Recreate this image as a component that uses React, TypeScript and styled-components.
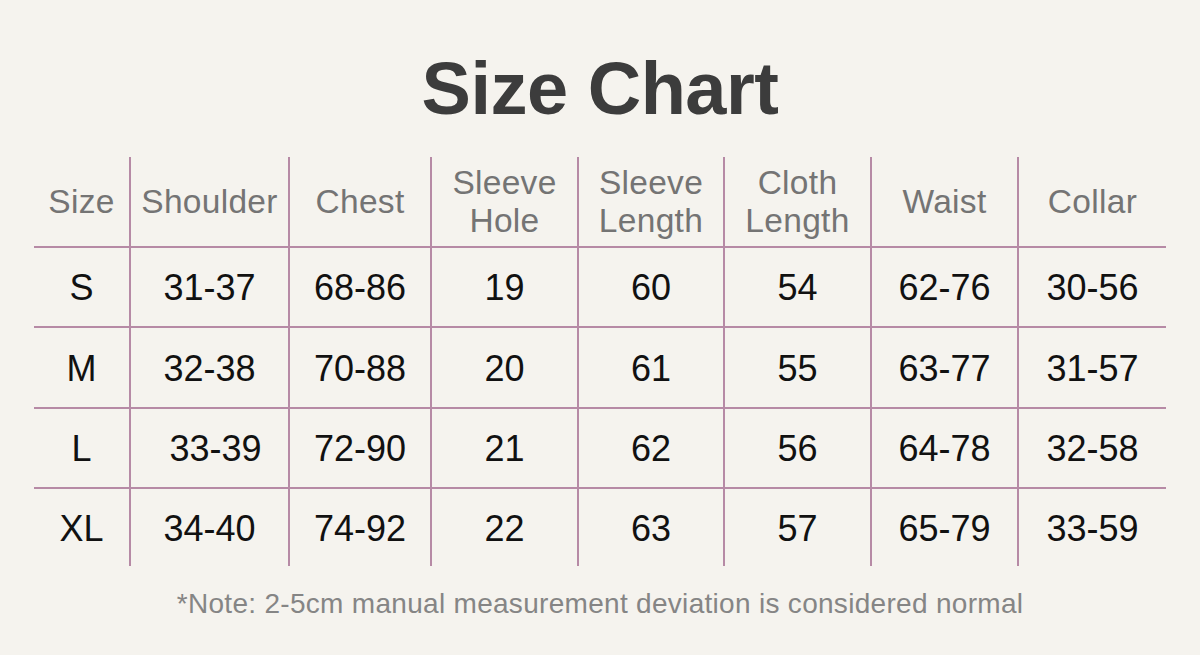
import React from "react";
import styled, { createGlobalStyle } from "styled-components";

const GlobalStyle = createGlobalStyle`
  html, body {
    margin: 0;
    padding: 0;
    background: #f5f3ee;
  }
  body {
    font-family: "Liberation Sans", Arial, sans-serif;
  }
`;

const Page = styled.div`
  width: 1200px;
  height: 655px;
  background: #f5f3ee;
  display: flex;
  flex-direction: column;
  align-items: center;
  padding-top: 52px;
  box-sizing: border-box;
  overflow: hidden;
`;

const Title = styled.h1`
  margin: 0;
  font-family: "Liberation Sans", Arial, sans-serif;
  font-weight: 700;
  font-size: 74px;
  line-height: 1;
  color: #3c3c3c;
  letter-spacing: -0.5px;
`;

const Grid = styled.div`
  margin-top: 31px;
  display: grid;
  grid-template-columns: 95px 159px 142px 147px 146px 147px 147px 149px;
  grid-template-rows: 89px 80px 81px 80px 79px;
`;

const Cell = styled.div<{ $col: number; $row: number; $header?: boolean; $nudge?: number }>`
  display: flex;
  align-items: center;
  justify-content: center;
  text-align: center;
  box-sizing: border-box;
  border-left: ${(p) => (p.$col > 0 ? "2px solid #b68aa5" : "none")};
  border-top: ${(p) => (p.$row > 0 ? "2px solid #b68aa5" : "none")};
  font-family: "Liberation Sans", Arial, sans-serif;
  font-size: ${(p) => (p.$header ? "33.5px" : "36px")};
  line-height: ${(p) => (p.$header ? "37.5px" : "1")};
  letter-spacing: ${(p) => (p.$header ? "0.3px" : "0")};
  color: ${(p) => (p.$header ? "#747474" : "#111111")};
  padding-left: ${(p) => (p.$nudge ? `${p.$nudge}px` : "0")};
  padding-top: ${(p) => (p.$header ? "0" : "2px")};
`;

const Note = styled.p`
  margin: 20px 0 0;
  font-family: "Liberation Sans", Arial, sans-serif;
  font-size: 28px;
  line-height: 36px;
  color: #858585;
  letter-spacing: 0.3px;
`;

const headers: React.ReactNode[] = [
  "Size",
  "Shoulder",
  "Chest",
  <>Sleeve<br />Hole</>,
  <>Sleeve<br />Length</>,
  <>Cloth<br />Length</>,
  "Waist",
  "Collar",
];

const rows: string[][] = [
  ["S", "31-37", "68-86", "19", "60", "54", "62-76", "30-56"],
  ["M", "32-38", "70-88", "20", "61", "55", "63-77", "31-57"],
  ["L", "33-39", "72-90", "21", "62", "56", "64-78", "32-58"],
  ["XL", "34-40", "74-92", "22", "63", "57", "65-79", "33-59"],
];

export default function App() {
  return (
    <>
      <GlobalStyle />
      <Page>
        <Title>Size Chart</Title>
        <Grid>
          {headers.map((h, c) => (
            <Cell key={`h${c}`} $col={c} $row={0} $header>
              <span>{h}</span>
            </Cell>
          ))}
          {rows.map((r, ri) =>
            r.map((v, c) => (
              <Cell key={`${ri}-${c}`} $col={c} $row={ri + 1} $nudge={ri === 2 && c === 1 ? 12 : 0}>
                {v}
              </Cell>
            ))
          )}
        </Grid>
        <Note>*Note: 2-5cm manual measurement deviation is considered normal</Note>
      </Page>
    </>
  );
}
